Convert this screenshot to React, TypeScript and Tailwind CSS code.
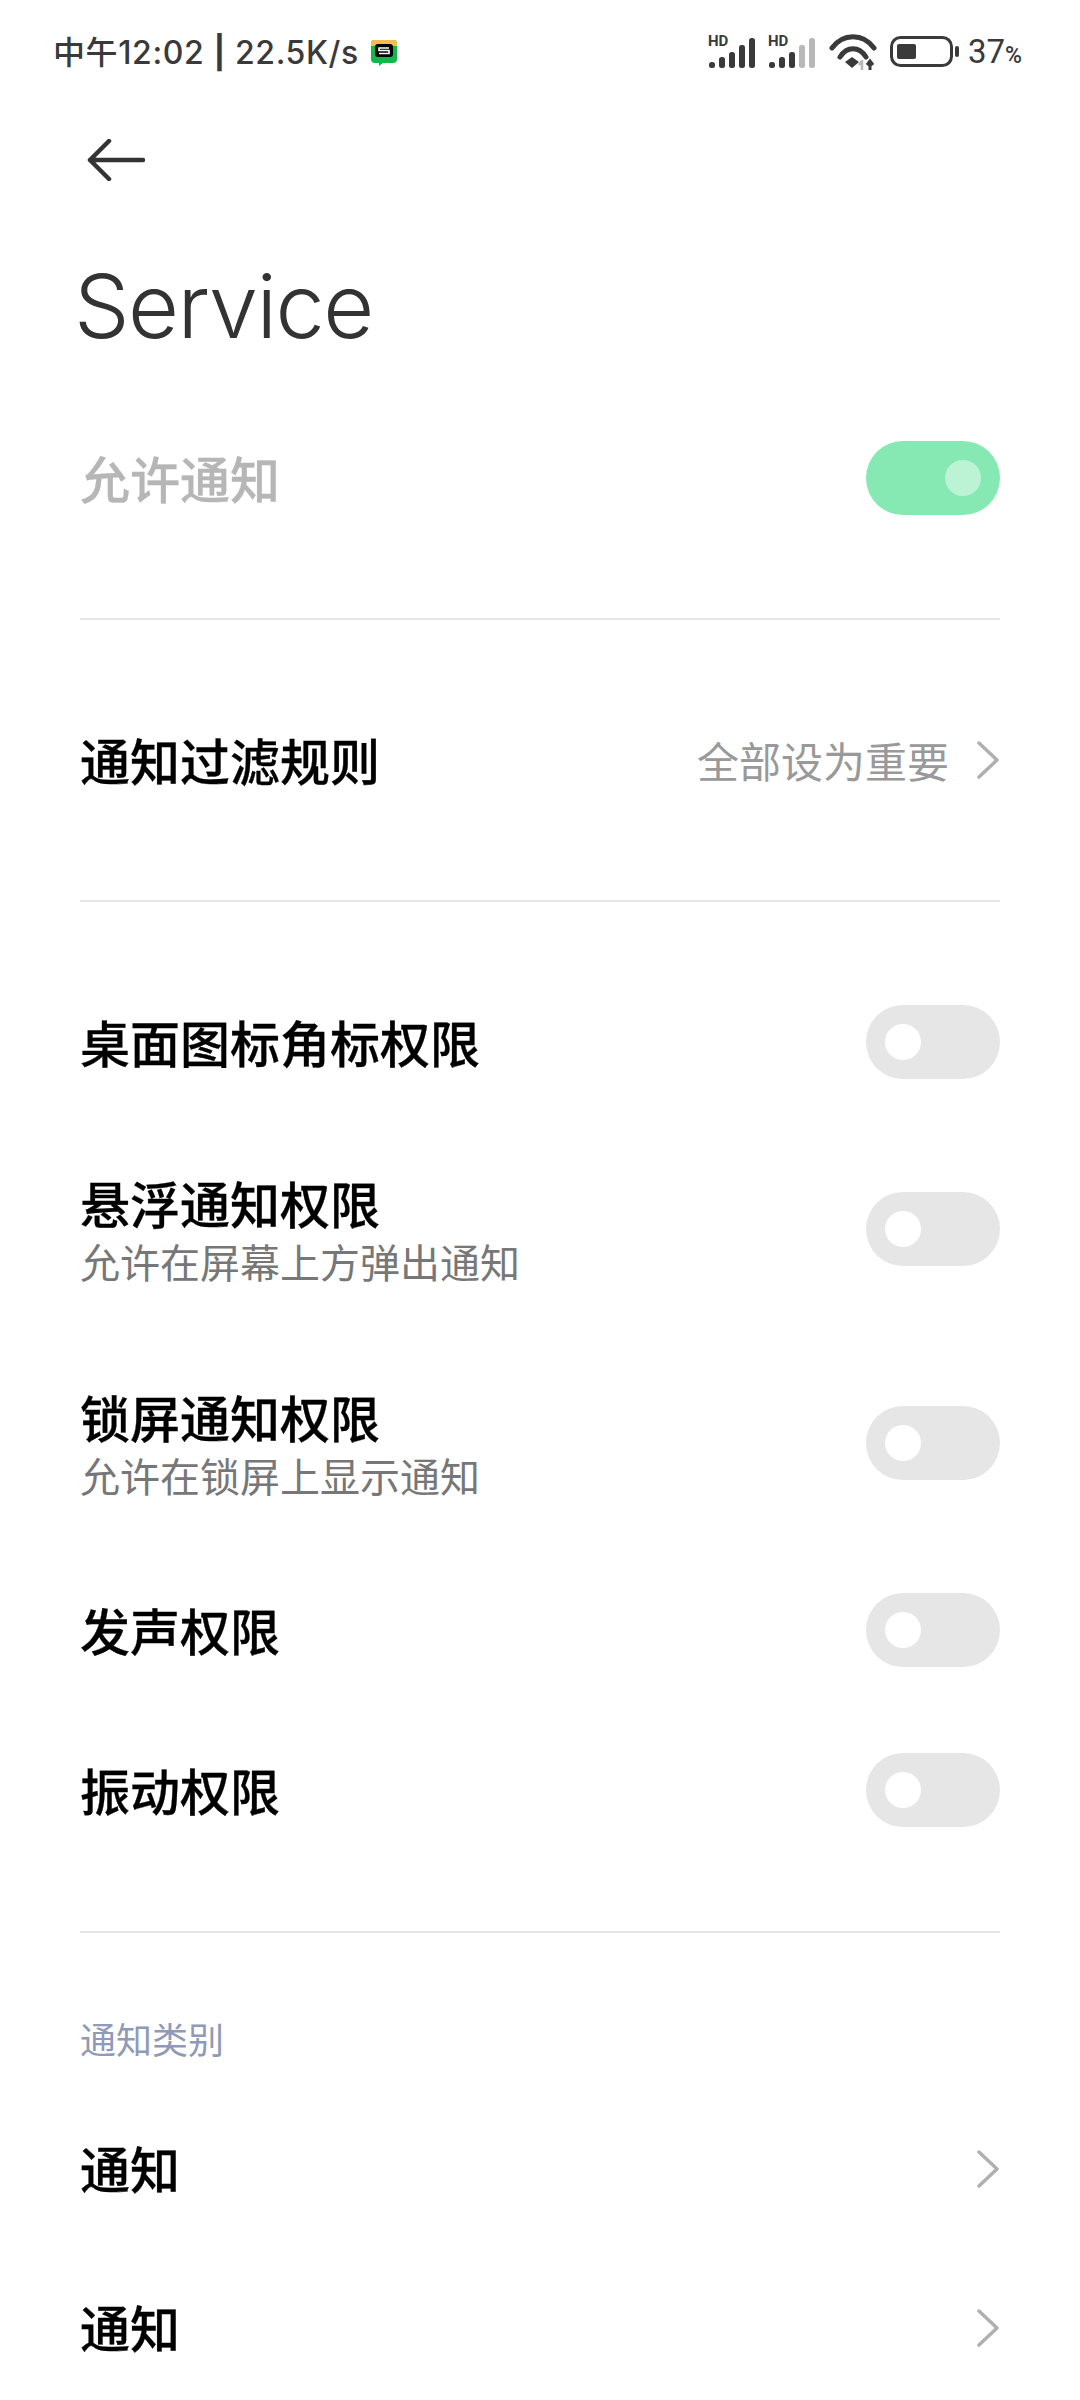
const cjk = "font-['Noto_Sans_CJK_SC',sans-serif]";

function Switch({ on = false }: { on?: boolean }) {
  return (
    <div className={`flex h-[74px] w-[134px] shrink-0 items-center rounded-full ${on ? 'justify-end bg-[#86e9b3] pr-[19px]' : 'justify-start bg-[#e6e6e6] pl-[19px]'}`}>
      <div className={`h-[36px] w-[36px] rounded-full ${on ? 'bg-[#bcf3d5]' : 'bg-white'}`} />
    </div>
  );
}

function Chevron({ cls = '' }: { cls?: string }) {
  return (
    <svg width="22" height="38" viewBox="0 0 22 38" fill="none" className={`mr-[1px] shrink-0 ${cls}`}>
      <path d="M2 2 L20 19 L2 36" stroke="#b0b0b0" strokeWidth="3.5" strokeLinecap="round" strokeLinejoin="round" />
    </svg>
  );
}

function Signal({ dim = 0 }: { dim?: number }) {
  const hs = [6, 11, 16, 23, 30];
  return (
    <div className="relative h-[32px] w-[48px]">
      <span className="absolute left-0 top-[-2px] font-['Roboto',sans-serif] text-[15px] leading-[15px] font-bold text-[#3a3a3a]">HD</span>
      <svg width="48" height="32" viewBox="0 0 48 32">
        {hs.map((h, i) => (
          <rect key={i} x={i * 10 + 1} y={32 - h} width="6" height={h} rx="2.5" fill={i >= 5 - dim ? '#b8b8b8' : '#3a3a3a'} />
        ))}
      </svg>
    </div>
  );
}

function Wifi() {
  return (
    <svg width="48" height="36" viewBox="0 0 48 36" fill="none">
      <path d="M3 14 C14 -1 34 -1 45 14" stroke="#3a3a3a" strokeWidth="5" strokeLinecap="round" />
      <path d="M11 23 C18 12 30 12 37 23" stroke="#3a3a3a" strokeWidth="5" strokeLinecap="round" />
      <path d="M16 28 L23 23 L30 28 L23 34 Z" fill="#3a3a3a" />
      <path d="M33 26 L33 36 M30 31 L33 27" stroke="#b8b8b8" strokeWidth="2.5" />
      <path d="M41 36 L41 28 M38 31 L41 27 L44 31" stroke="#3a3a3a" strokeWidth="3" />
    </svg>
  );
}

function Battery() {
  return (
    <svg width="69" height="32" viewBox="0 0 69 32" fill="none">
      <rect x="1.5" y="1.5" width="60" height="28" rx="9" stroke="#3a3a3a" strokeWidth="3" />
      <rect x="7" y="8" width="19" height="15" rx="2" fill="#3a3a3a" />
      <rect x="65" y="10" width="4" height="11" rx="2" fill="#3a3a3a" />
    </svg>
  );
}

function AppBadge() {
  return (
    <svg width="28" height="28" viewBox="0 0 28 28" className="shrink-0">
      <path d="M4 1 H24 Q27 1 27 5 V20 Q27 24 23 24 H13 L9 27 V24 H5 Q1 24 1 20 V5 Q1 1 4 1 Z" fill="#12b84a" />
      <path d="M4 1 H24 Q27 1 27 5 V7 H1 V5 Q1 1 4 1 Z" fill="#f4bd4f" />
      <rect x="5" y="5" width="18" height="13" rx="3" fill="#000" />
      <path d="M19 9 H9 V11.5 H19 V14.5 H9" stroke="#fff" strokeWidth="1.6" fill="none" />
    </svg>
  );
}

function Row({ title, sub, h, children, dim = false }: { title: string; sub?: string; h: string; children?: React.ReactNode; dim?: boolean }) {
  return (
    <div className={`flex items-center justify-between ${h}`}>
      <div className={`flex flex-col ${sub ? 'mt-[3px]' : 'mb-[3px]'}`}>
        <div className={`text-[50px] leading-[60px] font-medium [-webkit-text-stroke:0.3px_currentColor] ${dim ? 'text-[#b6b6b6]' : 'text-black'}`}>{title}</div>
        {sub && <div className="text-[40px] leading-[58px] text-[#777777]">{sub}</div>}
      </div>
      {children}
    </div>
  );
}

function Divider() {
  return <div className="h-[2px] bg-[#e5e5e5]" />;
}

export default function App() {
  return (
    <div className={`h-[2400px] w-[1080px] overflow-hidden bg-white ${cjk}`}>
      <div className="flex h-[104px] items-center justify-between pl-[53px] pr-[58px]">
        <div className="mt-[2px] flex items-center gap-[11px]">
          <span className="font-['Inter','Noto_Sans_CJK_SC',sans-serif] text-[32px] leading-[40px] font-medium tracking-[0.6px] text-[#3a3a3a]">中午12:02 <span className="font-bold">|</span> 22.5K/s</span>
          <AppBadge />
        </div>
        <div className="flex items-center">
          <Signal />
          <div className="ml-[12px]"><Signal dim={2} /></div>
          <div className="ml-[13px]"><Wifi /></div>
          <div className="ml-[13px]"><Battery /></div>
          <span className="ml-[9px] font-['Roboto',sans-serif] text-[33px] leading-[40px] text-[#3a3a3a]">37</span>
          <span className="mt-[8px] font-['Roboto',sans-serif] text-[23px] leading-[24px] font-medium text-[#3a3a3a]">%</span>
        </div>
      </div>

      <div className="pl-[87px] pt-[35px]">
        <svg width="58" height="42" viewBox="0 0 58 42" fill="none" className="block">
          <path d="M22 2 L3 21 L22 40 M3 21 H56" stroke="#333333" strokeWidth="4.5" strokeLinecap="round" strokeLinejoin="round" />
        </svg>
      </div>

      <div className="pl-[74px] pt-[70px] font-['Inter',sans-serif] text-[88px] leading-[110px] font-light tracking-[-1.5px] text-[#333333]">Service</div>

      <div className="px-[80px] pt-[80px]">
        <Row title="允许通知" h="h-[74px]" dim><Switch on /></Row>
        <div className="pt-[103px]"><Divider /></div>
        <Row title="通知过滤规则" h="h-[280px]">
          <div className="flex items-center gap-[28px]">
            <span className="text-[42px] leading-[56px] text-[#999999]">全部设为重要</span>
            <Chevron />
          </div>
        </Row>
        <Divider />
        <div className="pt-[103px]"><Row title="桌面图标角标权限" h="h-[74px]"><Switch /></Row></div>
        <div className="pt-[76px]">
          <Row title="悬浮通知权限" sub="允许在屏幕上方弹出通知" h="h-[148px]"><Switch /></Row>
        </div>
        <div className="pt-[66px]">
          <Row title="锁屏通知权限" sub="允许在锁屏上显示通知" h="h-[148px]"><Switch /></Row>
        </div>
        <div className="pt-[76px]"><Row title="发声权限" h="h-[74px]"><Switch /></Row></div>
        <div className="pt-[86px]"><Row title="振动权限" h="h-[74px]"><Switch /></Row></div>
        <div className="pt-[104px]"><Divider /></div>
        <div className="pt-[81px] text-[36px] leading-[48px] text-[#8f99b8]">通知类别</div>
        <Row title="通知" h="h-[158px] mt-[27px]"><Chevron cls="mt-[2px]" /></Row>
        <Row title="通知" h="h-[160px]"><Chevron cls="mt-[2px]" /></Row>
      </div>
    </div>
  );
}
